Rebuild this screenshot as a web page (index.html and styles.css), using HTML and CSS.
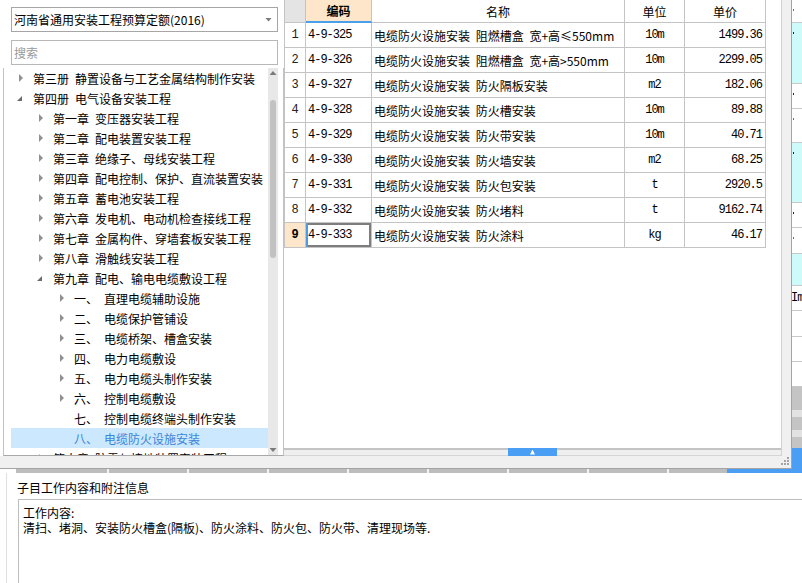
FILE: index.html
```html
<!DOCTYPE html>
<html lang="zh-CN">
<head>
<meta charset="utf-8">
<title>定额查询</title>
<link rel="stylesheet" href="styles.css">
</head>
<body>
<div class="top">
  <div class="main">
    <aside class="left">
      <div class="combo"><span>河南省通用安装工程预算定额(2016)</span><i class="caret"></i></div>
      <div class="search">搜索</div>
      <div class="tree">
        <ul class="list">
          <li class="row l1"><span class="tw"><svg class="tri" width="5" height="8" viewBox="0 0 5 8"><path d="M0 0L4 4L0 8Z"/></svg></span><span class="k">第三册</span>静置设备与工艺金属结构制作安装</li>
          <li class="row l1"><span class="tw"><svg class="exp" width="6" height="6" viewBox="0 0 6 6"><path d="M5 0V5H0Z"/></svg></span><span class="k">第四册</span>电气设备安装工程</li>
          <li class="row l2"><span class="tw"><svg class="tri" width="5" height="8" viewBox="0 0 5 8"><path d="M0 0L4 4L0 8Z"/></svg></span><span class="k">第一章</span>变压器安装工程</li>
          <li class="row l2"><span class="tw"><svg class="tri" width="5" height="8" viewBox="0 0 5 8"><path d="M0 0L4 4L0 8Z"/></svg></span><span class="k">第二章</span>配电装置安装工程</li>
          <li class="row l2"><span class="tw"><svg class="tri" width="5" height="8" viewBox="0 0 5 8"><path d="M0 0L4 4L0 8Z"/></svg></span><span class="k">第三章</span>绝缘子、母线安装工程</li>
          <li class="row l2"><span class="tw"><svg class="tri" width="5" height="8" viewBox="0 0 5 8"><path d="M0 0L4 4L0 8Z"/></svg></span><span class="k">第四章</span>配电控制、保护、直流装置安装</li>
          <li class="row l2"><span class="tw"><svg class="tri" width="5" height="8" viewBox="0 0 5 8"><path d="M0 0L4 4L0 8Z"/></svg></span><span class="k">第五章</span>蓄电池安装工程</li>
          <li class="row l2"><span class="tw"><svg class="tri" width="5" height="8" viewBox="0 0 5 8"><path d="M0 0L4 4L0 8Z"/></svg></span><span class="k">第六章</span>发电机、电动机检查接线工程</li>
          <li class="row l2"><span class="tw"><svg class="tri" width="5" height="8" viewBox="0 0 5 8"><path d="M0 0L4 4L0 8Z"/></svg></span><span class="k">第七章</span>金属构件、穿墙套板安装工程</li>
          <li class="row l2"><span class="tw"><svg class="tri" width="5" height="8" viewBox="0 0 5 8"><path d="M0 0L4 4L0 8Z"/></svg></span><span class="k">第八章</span>滑触线安装工程</li>
          <li class="row l2"><span class="tw"><svg class="exp" width="6" height="6" viewBox="0 0 6 6"><path d="M5 0V5H0Z"/></svg></span><span class="k">第九章</span>配电、输电电缆敷设工程</li>
          <li class="row l3"><span class="tw"><svg class="tri" width="5" height="8" viewBox="0 0 5 8"><path d="M0 0L4 4L0 8Z"/></svg></span><span class="k">一、</span>直理电缆辅助设施</li>
          <li class="row l3"><span class="tw"><svg class="tri" width="5" height="8" viewBox="0 0 5 8"><path d="M0 0L4 4L0 8Z"/></svg></span><span class="k">二、</span>电缆保护管铺设</li>
          <li class="row l3"><span class="tw"><svg class="tri" width="5" height="8" viewBox="0 0 5 8"><path d="M0 0L4 4L0 8Z"/></svg></span><span class="k">三、</span>电缆桥架、槽盒安装</li>
          <li class="row l3"><span class="tw"><svg class="tri" width="5" height="8" viewBox="0 0 5 8"><path d="M0 0L4 4L0 8Z"/></svg></span><span class="k">四、</span>电力电缆敷设</li>
          <li class="row l3"><span class="tw"><svg class="tri" width="5" height="8" viewBox="0 0 5 8"><path d="M0 0L4 4L0 8Z"/></svg></span><span class="k">五、</span>电力电缆头制作安装</li>
          <li class="row l3"><span class="tw"><svg class="tri" width="5" height="8" viewBox="0 0 5 8"><path d="M0 0L4 4L0 8Z"/></svg></span><span class="k">六、</span>控制电缆敷设</li>
          <li class="row l3"><span class="tw"></span><span class="k">七、</span>控制电缆终端头制作安装</li>
          <li class="row l3 sel"><span class="tw"></span><span class="k">八、</span>电缆防火设施安装</li>
          <li class="row l2"><span class="tw"><svg class="tri" width="5" height="8" viewBox="0 0 5 8"><path d="M0 0L4 4L0 8Z"/></svg></span><span class="k">第十章</span>防雷与接地装置安装工程</li>
        </ul>
        <div class="vscroll">
          <div class="vbtn"><i class="up"></i></div>
          <div class="vtrack"><div class="vthumb"></div></div>
          <div class="vbtn"><i class="down"></i></div>
        </div>
        <div class="tree-pad"></div>
      </div>
    </aside>
    <section class="center">
      <div class="grid">
        <div class="c h rn"></div><div class="c h hsel">编码</div><div class="c h">名称</div><div class="c h">单位</div><div class="c h">单价</div>
        <div class="c rn">1</div><div class="c code">4-9-325</div><div class="c name">电缆防火设施安装 阻燃槽盒 宽+高≤550mm</div><div class="c unit">10m</div><div class="c price">1499.36</div>
        <div class="c rn">2</div><div class="c code">4-9-326</div><div class="c name">电缆防火设施安装 阻燃槽盒 宽+高&gt;550mm</div><div class="c unit">10m</div><div class="c price">2299.05</div>
        <div class="c rn">3</div><div class="c code">4-9-327</div><div class="c name">电缆防火设施安装 防火隔板安装</div><div class="c unit">m2</div><div class="c price">182.06</div>
        <div class="c rn">4</div><div class="c code">4-9-328</div><div class="c name">电缆防火设施安装 防火槽安装</div><div class="c unit">10m</div><div class="c price">89.88</div>
        <div class="c rn">5</div><div class="c code">4-9-329</div><div class="c name">电缆防火设施安装 防火带安装</div><div class="c unit">10m</div><div class="c price">40.71</div>
        <div class="c rn">6</div><div class="c code">4-9-330</div><div class="c name">电缆防火设施安装 防火墙安装</div><div class="c unit">m2</div><div class="c price">68.25</div>
        <div class="c rn">7</div><div class="c code">4-9-331</div><div class="c name">电缆防火设施安装 防火包安装</div><div class="c unit">t</div><div class="c price">2920.5</div>
        <div class="c rn">8</div><div class="c code">4-9-332</div><div class="c name">电缆防火设施安装 防火堵料</div><div class="c unit">t</div><div class="c price">9162.74</div>
        <div class="c rn rsel">9</div><div class="c code csel">4-9-333</div><div class="c name">电缆防火设施安装 防火涂料</div><div class="c unit">kg</div><div class="c price">46.17</div>
      </div>
      <div class="hscroll"><div class="hthumb"><i class="up-w"></i></div></div>
    </section>
    <div class="gutter"></div>
    <svg class="grip" width="8" height="8" viewBox="0 0 8 8">
      <rect x="6" y="0" width="2" height="2" fill="#a3a3a3"/>
      <rect x="3" y="3" width="2" height="2" fill="#a3a3a3"/>
      <rect x="6" y="3" width="2" height="2" fill="#a3a3a3"/>
      <rect x="0" y="6" width="2" height="2" fill="#a3a3a3"/>
      <rect x="3" y="6" width="2" height="2" fill="#a3a3a3"/>
      <rect x="6" y="6" width="2" height="2" fill="#a3a3a3"/>
    </svg>
  </div>
  <div class="strip">
    <div class="s s23 w"><i class="dot p"></i></div>
    <div class="s s61 cy"><i class="dot k"></i></div>
    <div class="s s25 w"><i class="dot k"></i></div>
    <div class="s s34 w"><i class="dot p"></i></div>
    <div class="s s60 cy"><i class="dot k"></i></div>
    <div class="s s25 w"><i class="dot k"></i></div>
    <div class="s s26 w"><i class="dot p"></i></div>
    <div class="s s32 cy"></div>
    <div class="s s25 w"><span class="frag">Im</span></div>
    <div class="s s26 w"></div>
    <div class="s s25 w"></div>
    <div class="s s25 w"></div>
    <div class="s s23 g1"></div>
    <div class="s s7 g2"></div>
    <div class="s s13 g1"></div>
    <div class="s s7 g2"></div>
    <div class="s s11 g1"></div>
    <div class="s s21 blue"></div>
  </div>
</div>
<div class="splitter"><div class="split-blue"></div></div>
<div class="bottom">
  <div class="btitle">子目工作内容和附注信息</div>
  <div class="note">
    <div class="ln">工作内容:</div>
    <div class="ln">清扫、堵洞、安装防火槽盒(隔板)、防火涂料、防火包、防火带、清理现场等.</div>
  </div>
</div>
</body>
</html>
```

FILE: styles.css
```css
* { box-sizing: border-box; }
html, body { margin: 0; padding: 0; }
body {
  width: 802px;
  height: 583px;
  overflow: hidden;
  background: #ffffff;
  font-family: "Noto Sans CJK SC", "Liberation Sans", sans-serif;
  font-size: 12px;
  color: #000;
}

.top {
  display: flex;
  height: 469px;
  background: #f0f0f0;
}
.main {
  position: relative;
  display: flex;
  width: 792px;
  height: 469px;
  border-right: 1px solid #a4a4a4;
  border-bottom: 1px solid #a4a4a4;
}

/* left panel */
.left {
  width: 284px;
  height: 456px;
  background: #fff;
  display: flex;
  flex-direction: column;
  padding-top: 7px;
}
.combo {
  margin-left: 11px;
  width: 267px;
  height: 25px;
  border: 1px solid #a6a6a6;
  display: flex;
  align-items: center;
  justify-content: space-between;
  padding: 0 5px 0 2px;
  white-space: nowrap;
}
.caret {
  width: 7px;
  height: 4px;
  background: #7c7c7c;
  clip-path: polygon(0 0, 100% 0, 50% 100%);
}
.search {
  margin: 8px 0 0 11px;
  width: 267px;
  height: 25px;
  border: 1px solid #b8b8b8;
  display: flex;
  align-items: center;
  padding-left: 2px;
  color: #9a9a9a;
}
.tree {
  margin: 3px 0 0 3px;
  flex: 1;
  display: flex;
  border-left: 1px solid #c2c2c2;
  border-bottom: 1px solid #a9a9a9;
  border-right: 1px solid #c2c2c2;
  min-height: 0;
}
.list {
  list-style: none;
  margin: 0;
  padding: 0 0 0 7px;
  width: 264px;
  overflow: hidden;
}
.row {
  height: 20px;
  display: flex;
  align-items: center;
  white-space: nowrap;
}
.row.l1 { padding-left: 8px; }
.row.l2 { padding-left: 28px; }
.row.l3 { padding-left: 49px; }
.row.sel { background: #cce8ff; color: #3b84d8; }
.k { margin-right: 6px; }
.tw {
  flex: none;
  width: 14px;
  height: 20px;
  display: flex;
  align-items: center;
}
.tri { display: block; fill: #919191; }
.exp { display: block; fill: #6c6c6c; margin: 2px 0 0 -2px; }

.vscroll {
  width: 10px;
  background: #e8e8e8;
  display: flex;
  flex-direction: column;
}
.vbtn {
  height: 10px;
  display: flex;
  align-items: center;
  justify-content: center;
}
.up {
  width: 7px;
  height: 4px;
  background: #7a7a7a;
  clip-path: polygon(50% 0, 100% 100%, 0 100%);
}
.down {
  width: 7px;
  height: 4px;
  background: #7a7a7a;
  clip-path: polygon(0 0, 100% 0, 50% 100%);
}
.vtrack { flex: 1; }
.vthumb {
  margin: 22px 2px 0;
  height: 158px;
  border-radius: 3px;
  background: #c2c2c2;
}
.tree-pad { width: 5px; }

/* center table */
.center {
  width: 498px;
  height: 456px;
  background: #fff;
  border-right: 1px solid #d2d2d2;
  display: flex;
  flex-direction: column;
}
.grid {
  display: grid;
  grid-template-columns: 21px 66px 253px 60px 81px;
  grid-template-rows: 23px repeat(9, 25px);
  width: max-content;
  border-left: 1px solid #c4c4c4;
}
.c {
  border-right: 1px solid #c4c4c4;
  border-bottom: 1px solid #c4c4c4;
  display: flex;
  align-items: center;
  white-space: nowrap;
  overflow: hidden;
}
.h { justify-content: center; }
.h.rn { background: #e4e4e4; }
.hsel {
  background: #fde6c9;
  font-weight: bold;
  border-bottom: 2px solid #4a9fea;
}
.rn {
  justify-content: center;
  font-family: "Liberation Mono", "DejaVu Sans Mono", monospace;
  color: #222;
}
.rsel { background: #fde6c9; font-weight: bold; color: #000; }
.code {
  padding-left: 2px;
  font-family: "Liberation Mono", "DejaVu Sans Mono", monospace;
  letter-spacing: -1px;
}
.csel {
  box-shadow: inset 2px 0 0 #4a9bea, inset 0 0 0 2px #7d7d7d;
}
.name { padding-left: 2px; word-spacing: 3px; }
.unit {
  justify-content: center;
  font-family: "Liberation Mono", "DejaVu Sans Mono", monospace;
  letter-spacing: -1px;
}
.price {
  justify-content: flex-end;
  padding-right: 3px;
  font-family: "Liberation Mono", "DejaVu Sans Mono", monospace;
  letter-spacing: -1px;
}
.hscroll {
  margin-top: auto;
  height: 8px;
  display: flex;
  background: linear-gradient(#c4c4c4 0 2px, #efefef 2px 7px, #d6d6d6 7px 8px);
}
.hthumb {
  margin-left: 224px;
  width: 49px;
  height: 8px;
  background: #4a9ff5;
  display: flex;
  align-items: center;
  justify-content: center;
}
.up-w {
  width: 5px;
  height: 5px;
  background: #fff;
  clip-path: polygon(50% 0, 100% 100%, 0 100%);
}
.gutter { width: 9px; }
.grip {
  position: absolute;
  left: 781px;
  top: 457px;
}

/* right strip (neighbouring table) */
.strip {
  width: 10px;
  background: #fff;
  display: flex;
  flex-direction: column;
  overflow: hidden;
}
.s {
  flex: none;
  position: relative;
  border-bottom: 1px solid #c8c8c8;
}
.s7 { height: 7px; } .s11 { height: 11px; } .s13 { height: 13px; }
.s21 { height: 21px; } .s23 { height: 23px; } .s25 { height: 25px; }
.s26 { height: 26px; } .s32 { height: 32px; } .s34 { height: 34px; }
.s60 { height: 60px; } .s61 { height: 61px; }
.w { background: #fff; }
.cy { background: #ccfbfa; }
.g1 { background: #c4c4c4; border-bottom: none; }
.g2 { background: #e2e2e2; border-bottom: none; }
.blue { background: #4a9ff5; border-bottom: none; }
.dot {
  position: absolute;
  left: 1px;
  top: 9px;
  width: 1px;
  height: 2px;
}
.dot.p { background: #b040c8; }
.dot.k { background: #222; }
.frag {
  position: absolute;
  left: -1px;
  top: 5px;
  font-family: "Liberation Mono", monospace;
  font-size: 12px;
  letter-spacing: -1px;
  line-height: 14px;
}

/* splitter */
.splitter {
  margin-left: 16px;
  height: 4px;
  display: flex;
  justify-content: flex-end;
  background: repeating-linear-gradient(90deg, #bdbdbd 0 78px, #f2f2f2 78px 80px);
  background-position: 13px 0;
}
.split-blue {
  width: 75px;
  background: #4a9ff5;
}

/* bottom info */
.bottom {
  height: 110px;
  margin-left: 6px;
  border-left: 1px solid #e0e0e0;
  padding-left: 10px;
  background: #fff;
}
.btitle {
  padding-top: 6px;
  line-height: 18px;
  margin-bottom: 2px;
  white-space: nowrap;
}
.note {
  margin-left: 1px;
  height: 100px;
  width: 800px;
  border-top: 1px solid #bdbdbd;
  border-left: 1px solid #bdbdbd;
  padding: 5px 4px 4px;
  white-space: nowrap;
}
.ln {
  height: 15px;
  line-height: 15px;
}
```
